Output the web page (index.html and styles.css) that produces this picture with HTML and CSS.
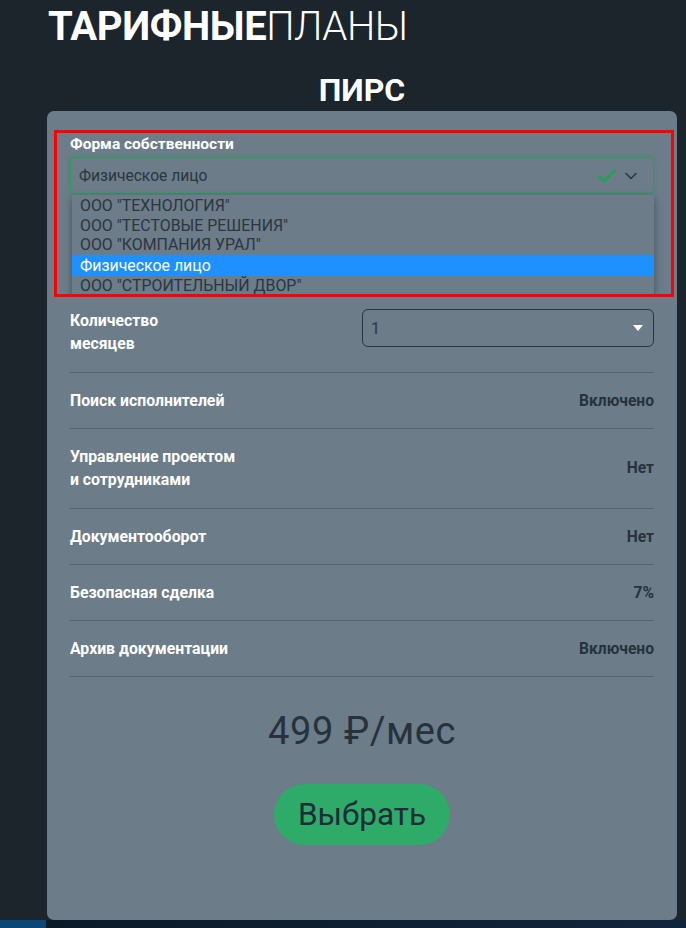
FILE: index.html
```html
<!DOCTYPE html>
<html lang="ru">
<head>
<meta charset="utf-8">
<title>Тарифные планы</title>
<link rel="stylesheet" href="styles.css">
</head>
<body>
<div class="page">
  <h1 class="title"><span class="title-bold">ТАРИФНЫЕ</span><span class="title-light">ПЛАНЫ</span></h1>
  <div class="column">
    <h2 class="plan-name">ПИРС</h2>
    <div class="card">
      <div class="highlight-box">
        <div class="field-label">Форма собственности</div>
        <div class="select-open">
          <span class="select-value">Физическое лицо</span>
          <span class="select-icons">
            <svg class="icon-check" width="18" height="14" viewBox="0 0 18 14"><path d="M1.5 7.5 L6.5 12 L16.5 1.5" fill="none" stroke="#2a9d5a" stroke-width="3.2" stroke-linecap="round" stroke-linejoin="round"/></svg>
            <svg class="icon-chevron" width="12" height="8" viewBox="0 0 12 8"><path d="M1 1.5 L6 6.5 L11 1.5" fill="none" stroke="#2b3640" stroke-width="1.5" stroke-linecap="round" stroke-linejoin="round"/></svg>
          </span>
        </div>
        <div class="hidden-field"></div>
        <ul class="dropdown">
          <li class="dropdown-item">ООО "ТЕХНОЛОГИЯ"</li>
          <li class="dropdown-item">ООО "ТЕСТОВЫЕ РЕШЕНИЯ"</li>
          <li class="dropdown-item">ООО "КОМПАНИЯ УРАЛ"</li>
          <li class="dropdown-item selected">Физическое лицо</li>
          <li class="dropdown-item">ООО "СТРОИТЕЛЬНЫЙ ДВОР"</li>
        </ul>
      </div>

      <div class="row row-months">
        <div class="row-label">Количество<br>месяцев</div>
        <div class="months-select">
          <span class="months-value">1</span>
          <svg class="caret" width="10" height="6" viewBox="0 0 10 6"><path d="M0 0 H10 L5 6 Z" fill="#ffffff"/></svg>
        </div>
      </div>
      <div class="row">
        <div class="row-label">Поиск исполнителей</div>
        <div class="row-value">Включено</div>
      </div>
      <div class="row row-double">
        <div class="row-label">Управление проектом<br>и сотрудниками</div>
        <div class="row-value">Нет</div>
      </div>
      <div class="row">
        <div class="row-label">Документооборот</div>
        <div class="row-value">Нет</div>
      </div>
      <div class="row">
        <div class="row-label">Безопасная сделка</div>
        <div class="row-value">7%</div>
      </div>
      <div class="row">
        <div class="row-label">Архив документации</div>
        <div class="row-value">Включено</div>
      </div>

      <div class="price">499 ₽/мес</div>
      <div class="actions"><button class="choose-btn">Выбрать</button></div>
    </div>
  </div>
</div>
<div class="footer-bar"><div class="footer-left"></div><div class="footer-right"></div></div>
</body>
</html>
```
FILE: styles.css
```css
* { box-sizing: border-box; }
html, body { margin: 0; padding: 0; }
body {
  background: #1c252c;
  font-family: Roboto, "Liberation Sans", Arial, sans-serif;
  color: #ffffff;
  width: 686px;
  height: 928px;
  overflow: hidden;
  display: flex;
  flex-direction: column;
}
.page {
  padding-left: 47px;
  flex: 1;
}
.title {
  margin: 0;
  padding: 3px 0 0 1px;
  font-size: 40px;
  line-height: 47px;
  letter-spacing: -0.4px;
  color: #ffffff;
}
.title-bold { font-weight: 700; }
.title-light { font-weight: 300; }
.column { width: 630px; }
.plan-name {
  margin: 21px 0 2px;
  font-size: 32px;
  line-height: 38px;
  font-weight: 700;
  text-align: center;
  color: #ffffff;
}
.card {
  background: #6c7c89;
  border-radius: 7px;
  padding: 19px 23px 75px;
  height: 809px;
}
.highlight-box {
  position: relative;
  margin: 0 -20px 0 -16px;
  padding: 0 17px 0 13px;
  border: 3px solid #ff0000;
  height: 167px;
  overflow: hidden;
}
.field-label {
  font-size: 15.5px;
  font-weight: 700;
  line-height: 22px;
  color: #ffffff;
}
.select-open {
  margin-top: 2px;
  height: 37px;
  border: 1px solid #2a9d5a;
  border-radius: 5px;
  box-shadow: 0 0 0 3px rgba(42, 157, 90, 0.18);
  display: flex;
  align-items: center;
  justify-content: space-between;
  padding: 0 16px 0 8px;
}
.select-value {
  font-size: 15.6px;
  color: #2b3640;
}
.select-icons {
  display: flex;
  align-items: center;
  gap: 9px;
}
.hidden-field { height: 80px; }
.dropdown {
  position: absolute;
  left: 15px;
  right: 17px;
  top: 62px;
  margin: 0;
  padding: 1px 0 0;
  list-style: none;
  background: #6c7c89;
  box-shadow: 0 3px 8px rgba(0, 0, 0, 0.35);
}
.dropdown-item {
  height: 19.7px;
  line-height: 19.7px;
  font-size: 15.9px;
  padding-left: 8px;
  color: #2b3640;
}
.dropdown-item.selected {
  height: 21px;
  line-height: 21px;
  background: #1e90ff;
  color: #ffffff;
}
.row {
  display: flex;
  justify-content: space-between;
  align-items: center;
  padding: 16px 0;
  border-bottom: 1px solid #56646f;
}
.row-months {
  align-items: flex-start;
  padding: 12px 0 17px;
}
.row-double { padding: 16px 0 17px; }
.row-label {
  font-size: 15.8px;
  font-weight: 700;
  line-height: 23px;
  color: #ffffff;
}
.row-value {
  font-size: 15.6px;
  font-weight: 700;
  color: #27323c;
}
.months-select {
  width: 292px;
  height: 38px;
  border: 1px solid #2b3640;
  border-radius: 6px;
  display: flex;
  align-items: center;
  justify-content: space-between;
  padding: 0 10px 0 8px;
}
.months-value {
  font-size: 16px;
  color: #2b3640;
}
.price {
  margin-top: 33px;
  text-align: center;
  font-size: 38px;
  line-height: 42px;
  letter-spacing: 0.6px;
  color: #27323c;
}
.actions {
  display: flex;
  justify-content: center;
  margin-top: 32px;
}
.choose-btn {
  width: 176px;
  height: 61px;
  border: none;
  border-radius: 31px;
  background: #2eaa69;
  color: #1f2d38;
  font-family: Roboto, "Liberation Sans", Arial, sans-serif;
  font-size: 31.5px;
  padding: 0;
}
.footer-bar {
  height: 8px;
  display: flex;
}
.footer-left {
  width: 46px;
  background: #0b4675;
}
.footer-right {
  flex: 1;
  background: linear-gradient(90deg, #0c1a28, #10253b);
}
```
